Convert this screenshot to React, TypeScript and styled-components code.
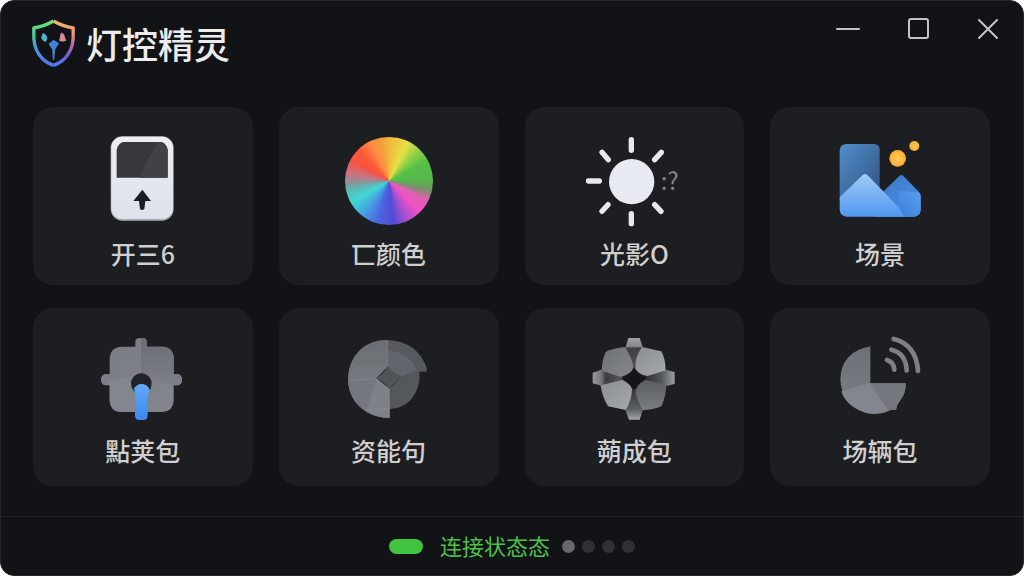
import type { ReactNode } from 'react'
import styled, { createGlobalStyle } from 'styled-components'

const Shield = () => (
  <Logo viewBox="92 54 134 150" aria-hidden="true">
    <defs>
      <linearGradient id="shieldLeft" x1="0" y1="0" x2="0" y2="1">
        <stop offset="0" stopColor="#6fe07a" />
        <stop offset="0.3" stopColor="#45cf9a" />
        <stop offset="0.6" stopColor="#4a93dc" />
        <stop offset="1" stopColor="#4f7bf0" />
      </linearGradient>
      <linearGradient id="shieldRight" x1="0" y1="0" x2="0" y2="1">
        <stop offset="0" stopColor="#eeb568" />
        <stop offset="0.25" stopColor="#f09a78" />
        <stop offset="0.55" stopColor="#b567a8" />
        <stop offset="0.8" stopColor="#6a5fd8" />
        <stop offset="1" stopColor="#4f7bf0" />
      </linearGradient>
    </defs>
    <g fill="none" strokeWidth="10" strokeLinejoin="round">
      <path d="M159 63 Q132 79 100 84 V115 Q102 151 125 175 Q140 190 159 196" stroke="url(#shieldLeft)" />
      <path d="M159 63 Q186 79 218 84 V115 Q216 151 193 175 Q178 190 159 196" stroke="url(#shieldRight)" />
    </g>
    <path d="M127 98 Q142 105 140 117 L136 126 Q124 121 122 113Z" fill="#4ab5c4" />
    <path d="M181 98 Q192 100 193 110 L197 122 L186 125 L176 122Z" fill="#d98a92" />
    <path d="M159 119 L176 130 L164 148 L161 180 H157 L155 148 L144 132Z" fill="#3f83d6" />
  </Logo>
)

const SwitchIcon = () => (
  <Drawing viewBox="193 99 288 288" aria-hidden="true">
    <defs>
      <linearGradient id="switchBody" x1="0" y1="0" x2="0" y2="1">
        <stop offset="0" stopColor="#eceef4" />
        <stop offset="1" stopColor="#dde1ea" />
      </linearGradient>
    </defs>
    <rect x="240" y="109" width="189" height="253" rx="35" fill="#a9adb5" />
    <rect x="242" y="110" width="185" height="247" rx="33" fill="url(#switchBody)" />
    <path d="M278 126 H391 Q398 127 403 133 Q411 142 411 150 V233 H258 V150 Q258 142 266 133 Q271 127 278 126Z" fill="#37383b" />
    <path d="M385 126 H391 Q398 127 403 133 Q411 142 411 150 V233 H328 Q348 172 385 126Z" fill="#414245" />
    <path d="M335 269 L361 303 H344 L341 327 Q334 333 328 327 L325 303 H308Z" fill="#1c1d20" />
  </Drawing>
)

const SunIcon = () => (
  <Drawing viewBox="199 99 288 288" aria-hidden="true">
    <circle cx="336" cy="245" r="68" fill="#e8eaf2" />
    <g stroke="#e6eae9" strokeWidth="16" strokeLinecap="round">
      <path d="M335 119 V151" />
      <path d="M335 341 V371" />
      <path d="M206 243 H239" />
      <path d="M247 157 L266 179" />
      <path d="M425 157 L405 179" />
      <path d="M265 314 L247 334" />
      <path d="M405 314 L424 334" />
    </g>
    <Mark x="423" y="271">:?</Mark>
  </Drawing>
)

const SceneIcon = () => (
  <Drawing viewBox="202 99 288 288" aria-hidden="true">
    <defs>
      <linearGradient id="sceneSky" x1="0" y1="0" x2="1" y2="1">
        <stop offset="0" stopColor="#508fcb" />
        <stop offset="1" stopColor="#30507f" />
      </linearGradient>
      <linearGradient id="sceneFront" x1="0" y1="0" x2="0" y2="1">
        <stop offset="0" stopColor="#a2cbf8" />
        <stop offset="1" stopColor="#4e98f0" />
      </linearGradient>
      <linearGradient id="sceneBack" x1="0" y1="0" x2="1" y2="1">
        <stop offset="0" stopColor="#3a78c8" />
        <stop offset="1" stopColor="#4a8fe4" />
      </linearGradient>
      <linearGradient id="sceneFacet" x1="0" y1="1" x2="1" y2="0">
        <stop offset="0" stopColor="#3b7ed8" />
        <stop offset="1" stopColor="#589ff0" />
      </linearGradient>
      <radialGradient id="sceneSun">
        <stop offset="0" stopColor="#ffcc55" />
        <stop offset="1" stopColor="#f5ae35" />
      </radialGradient>
    </defs>
    <path d="M243 132 H329 Q345 134 345 150 V300 H225 V152 Q226 134 243 132Z" fill="url(#sceneSky)" />
    <path d="M404 228 Q410 222 416 228 L463 276 Q468 281 468 288 V330 Q466 348 448 350 H330 V300Z" fill="url(#sceneBack)" />
    <path d="M402 273 L461 277 Q468 281 468 288 V330 Q466 348 448 350 H416 L400 330Z" fill="url(#sceneFacet)" />
    <path d="M294 225 Q301 219 308 225 L358 276 L403 323 L418 350 H246 Q227 348 225 330 V292Z" fill="url(#sceneFront)" />
    <circle cx="399" cy="175" r="25" fill="url(#sceneSun)" />
    <circle cx="449" cy="138" r="15" fill="url(#sceneSun)" />
  </Drawing>
)

const PlugIcon = () => (
  <Drawing viewBox="193 90 288 288" aria-hidden="true">
    <defs>
      <linearGradient id="plugBody" x1="0" y1="0" x2="1" y2="1">
        <stop offset="0" stopColor="#787b83" />
        <stop offset="1" stopColor="#84878f" />
      </linearGradient>
      <linearGradient id="plugShade" x1="0" y1="0" x2="0" y2="1">
        <stop offset="0" stopColor="#6a6d76" />
        <stop offset="1" stopColor="#7c7f88" />
      </linearGradient>
      <linearGradient id="plugPin" x1="0" y1="0" x2="0" y2="1">
        <stop offset="0" stopColor="#62a8fb" />
        <stop offset="1" stopColor="#3c88ee" />
      </linearGradient>
    </defs>
    <path
      d="M314 140 V125 Q315 114 326 114 H337 Q348 114 348 125 V140 H395 Q429 142 429 176 V222 H441 Q454 225 454 239 Q454 253 441 256 H429 V302 Q427 334 396 336 H270 Q239 334 237 302 V256 H223 Q211 253 211 239 Q211 225 223 222 H237 V176 Q239 142 272 140Z"
      fill="url(#plugBody)"
    />
    <path d="M331 114 H337 Q348 114 348 125 V140 H395 Q429 142 429 176 V222 H441 Q454 225 454 239 Q454 253 441 256 H429 L331 222Z" fill="url(#plugShade)" />
    <path d="M237 246 L331 222 V336 H270 Q239 334 237 302Z" fill="#83868f" />
    <circle cx="332" cy="251" r="31" fill="#222327" />
    <path d="M310 265 Q321 251 334 252 Q352 254 357 270 Q346 298 351 322 V348 Q350 360 338 360 H325 Q314 360 313 348 V322 Q319 294 310 265Z" fill="url(#plugPin)" />
  </Drawing>
)

const ApertureIcon = () => (
  <Drawing viewBox="196 90 288 288" aria-hidden="true">
    <defs>
      <linearGradient id="apertureLeft" x1="0" y1="0" x2="0" y2="1">
        <stop offset="0" stopColor="#6a6e73" />
        <stop offset="1" stopColor="#80848a" />
      </linearGradient>
    </defs>
    <path d="M336 120 Q424 124 453 203 V215 H434 L336 235Z" fill="#56595e" />
    <path d="M336 152 Q400 154 424 212 L377 232 L336 200Z" fill="#62666c" />
    <path d="M341 266 L377 232 L429 207 Q440 258 404 301 Q380 325 341 328Z" fill="#54575c" />
    <path d="M336 120 V200 L302 235 L341 266 V354 Q278 354 239 306 Q216 274 217 233 Q220 176 262 142 Q295 118 336 120Z" fill="url(#apertureLeft)" />
    <path d="M217 243 L302 235 L272 333 Q222 302 217 243Z" fill="#74787e" />
    <path d="M302 235 L341 266 V354 Q306 354 272 333Z" fill="#7e8288" />
    <path d="M336 198 Q348 224 386 229 Q358 244 341 268 Q325 244 300 235 Q325 222 336 198Z" fill="#505358" />
    <path d="M336 121 V198 M341 268 V353 M219 243 L300 235" fill="none" stroke="#888c91" strokeWidth="2" />
    <path d="M272 327 H341" fill="none" stroke="#8a8e93" strokeWidth="2" />
  </Drawing>
)

const PetalIcon = () => (
  <Drawing viewBox="199 90 288 288" aria-hidden="true">
    <defs>
      <linearGradient id="petalA" x1="0" y1="0" x2="1" y2="1">
        <stop offset="0" stopColor="#6c6f73" />
        <stop offset="1" stopColor="#85888c" />
      </linearGradient>
      <linearGradient id="petalB" x1="0" y1="0" x2="1" y2="1">
        <stop offset="0" stopColor="#8a8d92" />
        <stop offset="1" stopColor="#a6a9ae" />
      </linearGradient>
      <linearGradient id="petalC" x1="0" y1="0" x2="0" y2="1">
        <stop offset="0" stopColor="#595c60" />
        <stop offset="1" stopColor="#7b7e82" />
      </linearGradient>
      <linearGradient id="petalTop" x1="0" y1="0" x2="0" y2="1">
        <stop offset="0" stopColor="#a0a4a8" />
        <stop offset="0.25" stopColor="#85888c" />
        <stop offset="0.3" stopColor="#3c3e44" />
        <stop offset="1" stopColor="#55575d" />
      </linearGradient>
      <linearGradient id="petalBottom" x1="0" y1="0" x2="0" y2="1">
        <stop offset="0" stopColor="#2c2e32" />
        <stop offset="0.7" stopColor="#5c5f63" />
        <stop offset="1" stopColor="#a4a8ac" />
      </linearGradient>
      <linearGradient id="petalLeft" x1="0" y1="0" x2="1" y2="0">
        <stop offset="0" stopColor="#96999d" />
        <stop offset="0.25" stopColor="#77797d" />
        <stop offset="0.4" stopColor="#3c3e42" />
        <stop offset="1" stopColor="#5a5c60" />
      </linearGradient>
      <linearGradient id="petalRight" x1="0" y1="0" x2="1" y2="0">
        <stop offset="0" stopColor="#232529" />
        <stop offset="0.6" stopColor="#55585c" />
        <stop offset="1" stopColor="#9a9da1" />
      </linearGradient>
    </defs>
    <path d="M326 114 H360 L369 140 L380 165 L344 215 L310 165 L319 138Z" fill="url(#petalTop)" />
    <path d="M310 305 L342 255 L378 305 L368 334 L360 359 H328 L318 333Z" fill="url(#petalBottom)" />
    <path d="M219 218 L245 209 L265 205 L318 235 L265 268 L240 256 L219 250Z" fill="url(#petalLeft)" />
    <path d="M465 216 L438 209 L420 205 L366 235 L420 268 L440 258 L465 252Z" fill="url(#petalRight)" />
    <path d="M258 156 Q276 145 317 141 L334 175 Q345 203 336 213 Q322 227 302 230 L246 212 Q247 180 258 156Z" fill="url(#petalA)" />
    <path d="M367 141 L425 154 Q437 175 438 211 L384 228 Q360 226 348 208 Q343 175 367 141Z" fill="url(#petalB)" />
    <path d="M243 256 L308 240 Q330 250 337 266 Q337 298 318 330 L265 319 Q247 290 243 256Z" fill="url(#petalB)" />
    <path d="M378 240 L440 256 Q438 291 426 318 Q402 329 368 331 L348 282 Q347 254 378 240Z" fill="url(#petalC)" />
    <path d="M343 202 Q354 224 381 234 Q356 243 343 270 Q330 246 304 235 Q333 226 343 202Z" fill="#141519" />
  </Drawing>
)

const SignalIcon = () => (
  <Drawing viewBox="202 90 288 288" aria-hidden="true">
    <defs>
      <linearGradient id="signalPie" x1="0" y1="0" x2="0" y2="1">
        <stop offset="0" stopColor="#6c7076" />
        <stop offset="1" stopColor="#7c7f87" />
      </linearGradient>
    </defs>
    <path d="M317 139 V250 H423 Q424 280 406 302 L398 314 L394 329 L378 330 Q342 348 303 338 Q230 315 227 238 Q230 155 317 139Z" fill="url(#signalPie)" />
    <path d="M317 250 L372 332 Q338 347 303 338 Q244 320 230 274Z" fill="#83868e" />
    <path d="M317 250 H423 Q424 280 406 302 L398 314 L394 329 L378 330 L372 332Z" fill="#74777e" />
    <g fill="none" stroke="#7d8187" strokeWidth="14" strokeLinecap="round">
      <path d="M367 180 Q388 187 389 209" />
      <path d="M380 149 Q424 160 426 211" />
      <path d="M387 117 Q455 134 460 213" />
    </g>
  </Drawing>
)

const Wheel = () => (
  <WheelBox>
    <WheelDisc />
  </WheelBox>
)

type Feature = {
  label: string
  icon: ReactNode
}

const App = () => {
  const lights: Feature[] = [
    { label: '开三6', icon: <SwitchIcon /> },
    { label: '匸颜色', icon: <Wheel /> },
    { label: '光影O', icon: <SunIcon /> },
    { label: '场景', icon: <SceneIcon /> },
  ]

  const packs: Feature[] = [
    { label: '點荚包', icon: <PlugIcon /> },
    { label: '资能句', icon: <ApertureIcon /> },
    { label: '蒴成包', icon: <PetalIcon /> },
    { label: '场辆包', icon: <SignalIcon /> },
  ]

  return (
    <>
      <GlobalStyle />
      <Window>
        <Header>
          <Brand>
            <Shield />
            <h1>灯控精灵</h1>
          </Brand>
          <Controls>
            <ControlButton type="button" aria-label="最小化">
              <svg viewBox="0 0 24 24"><path d="M1 13 H23" /></svg>
            </ControlButton>
            <ControlButton type="button" aria-label="最大化">
              <svg viewBox="0 0 24 24"><rect x="3" y="3" width="19" height="19" rx="2" /></svg>
            </ControlButton>
            <ControlButton type="button" aria-label="关闭">
              <svg viewBox="0 0 24 24"><path d="M3 4 L21 22 M21 4 L3 22" /></svg>
            </ControlButton>
          </Controls>
        </Header>
        <Grid>
          {lights.map(({ label, icon }) => (
            <Card type="button" key={label} $gap={6}>
              {icon}
              <Label>{label}</Label>
            </Card>
          ))}
          {packs.map(({ label, icon }) => (
            <Card type="button" key={label} $compact $gap={6}>
              {icon}
              <Label>{label}</Label>
            </Card>
          ))}
        </Grid>
        <Footer>
          <Pill />
          <Status>连接状态态</Status>
          <Dots>
            <Dot $active />
            <Dot />
            <Dot />
            <Dot />
          </Dots>
        </Footer>
      </Window>
    </>
  )
}

export default App

const GlobalStyle = createGlobalStyle`
*{
  box-sizing:border-box;
}
body{
  margin:0;
  background:#ffffff;
  font-family:"Noto Sans CJK SC", "Noto Sans", sans-serif;
}
button{
  font-family:inherit;
}
`
const Window = styled.div`
min-height:100vh;
display:flex;
flex-direction:column;
background:#121317;
border:1px solid #25272b;
border-radius:14px;
overflow:hidden;
`
const Header = styled.header`
height:106px;
display:flex;
justify-content:space-between;
align-items:flex-start;
`
const Brand = styled.div`
display:flex;
align-items:center;
gap:10px;
padding:17px 0 0 30px;
h1{
  margin:0;
  font-size:36px;
  line-height:48px;
  font-weight:500;
  color:#ececec;
}
`
const Logo = styled.svg`
width:45px;
height:50px;
`
const Controls = styled.div`
display:flex;
`
const ControlButton = styled.button`
width:70px;
height:54px;
display:flex;
justify-content:center;
align-items:center;
padding:0;
border:0;
background:transparent;
cursor:pointer;
svg{
  width:24px;
  height:24px;
  fill:none;
  stroke:#c4c4c4;
  stroke-width:2;
  stroke-linecap:round;
}
`
const Grid = styled.main`
flex:1;
display:grid;
grid-template-columns:repeat(4, 1fr);
grid-auto-rows:178px;
gap:23px 26px;
padding:0 33px 30px 32px;
`
const Card = styled.button<{ $gap: number; $compact?: boolean }>`
display:flex;
flex-direction:column;
align-items:center;
gap:${({ $gap }) => $gap}px;
padding:${({ $compact }) => ($compact ? 22 : 26)}px 0 0;
border:0;
border-radius:20px;
background:#1d1e22;
cursor:pointer;
`
const Drawing = styled.svg`
width:96px;
height:96px;
flex-shrink:0;
`
const Mark = styled.text`
font-family:"Noto Sans CJK SC", sans-serif;
font-size:72px;
fill:#85868a;
`
const WheelBox = styled.div`
width:96px;
height:96px;
flex-shrink:0;
display:flex;
justify-content:center;
align-items:center;
`
const WheelDisc = styled.div`
width:88px;
height:88px;
border-radius:50%;
background:conic-gradient(
  #f2b73c 0deg,
  #e6e046 26deg,
  #8fd046 44deg,
  #56c048 62deg,
  #55b84c 88deg,
  #7c8f6e 104deg,
  #e35fb4 118deg,
  #f050c4 136deg,
  #a850d0 156deg,
  #524cd6 174deg,
  #4a66e0 196deg,
  #46a2e2 218deg,
  #40d8d4 240deg,
  #58bcb8 256deg,
  #8f9098 268deg,
  #c87484 280deg,
  #f8523f 300deg,
  #ff5a38 316deg,
  #ff8a42 334deg,
  #f2a03c 350deg,
  #f2b73c 360deg
);
`
const Label = styled.span`
font-size:25px;
line-height:36px;
font-weight:500;
color:#cfcfcf;
`
const Footer = styled.footer`
height:59px;
display:flex;
justify-content:center;
align-items:center;
border-top:1px solid #212327;
`
const Pill = styled.span`
width:34px;
height:15px;
margin-right:17px;
border-radius:8px;
background:#42c442;
`
const Status = styled.span`
padding-bottom:2px;
font-size:22px;
line-height:32px;
color:#4fc04a;
`
const Dots = styled.div`
display:flex;
gap:7px;
margin-left:12px;
`
const Dot = styled.span<{ $active?: boolean }>`
width:13px;
height:13px;
border-radius:50%;
background:${({ $active }) => ($active ? '#67686c' : '#2f3135')};
`
